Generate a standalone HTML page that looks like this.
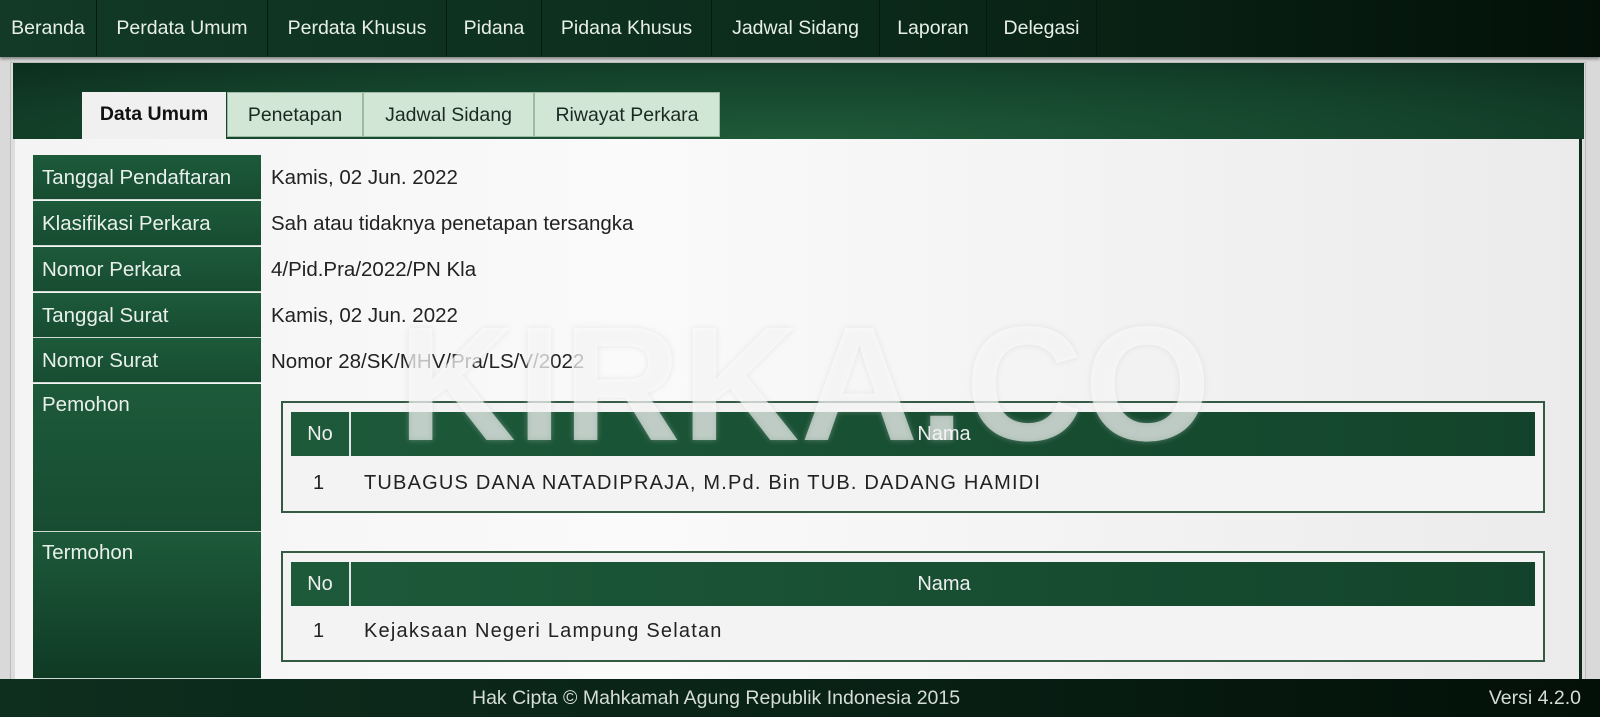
<!DOCTYPE html>
<html><head><meta charset="utf-8"><style>
*{margin:0;padding:0;box-sizing:border-box}
body{width:1600px;height:717px;overflow:hidden;background:#d9d9d9;font-family:"Liberation Sans",sans-serif;position:relative}
.nav{position:absolute;left:0;top:0;width:1600px;height:57px;background:linear-gradient(90deg,#123a26,#0c2c1c 50%,#031109);box-shadow:0 2px 3px rgba(0,0,0,.4)}
.nav div{position:absolute;top:0;height:56px;line-height:56px;color:#e8efe9;font-size:19.5px;text-align:center;border-right:1px solid #071a10}
.wrap{position:absolute;left:10px;top:62px;width:1576px;height:620px;background:#ddd;border:1px solid #bbb}
.band{position:absolute;left:13px;top:63px;width:1571px;height:76px;background:radial-gradient(ellipse at 50% 100%,#1f5a3a,#14432b 60%,#0c2e1d)}
.content{position:absolute;left:15px;top:139px;width:1567px;height:540px;background:linear-gradient(90deg,#f4f4f4,#fafafa 40%,#ebebeb);border-right:3px solid #0d2a1a}
.tab{position:absolute;top:92px;height:45px;line-height:44px;font-size:19.5px;text-align:center;color:#1a2a20;background:#d2e6d6;border:1px solid #9dbaa4}
.tab.on{background:#f0f0f0;font-weight:bold;color:#111;height:47px;border:none}
.lab{position:absolute;left:33px;width:228px;background:linear-gradient(180deg,#1d5a3a,#174c31);color:#e9f0ea;font-size:20.5px;padding:11px 9px;border-bottom:1px solid #cfd8d2}
.val{position:absolute;left:271px;font-size:20.5px;color:#222}
.box{position:absolute;left:281px;width:1264px;border:2px solid #355a44;background:#f3f3f3}
.hd{position:absolute;left:8px;right:8px;top:9px;height:44px;background:linear-gradient(90deg,#1d5a3a,#13442b);color:#eef;font-size:20px;line-height:44px}
.hd .no{position:absolute;left:0;width:60px;text-align:center;border-right:2px solid #e5e5e5;height:44px;color:#eee}
.hd .nm{position:absolute;left:62px;right:0;text-align:center;color:#eee}
.row{position:absolute;top:60px;left:0;font-size:20px;color:#222;letter-spacing:1.2px}
.footer{position:absolute;left:0;top:679px;width:1600px;height:38px;background:linear-gradient(90deg,#0e2e1e,#092216 50%,#031008);color:#d6ddd8;font-size:19.5px}
.wm{position:absolute;left:398px;top:290px;font-size:163px;font-weight:bold;color:rgba(255,255,255,.6);letter-spacing:1px;text-shadow:0 0 6px rgba(200,200,200,.4)}
</style></head><body>
<div class="nav">
<div style="left:0;width:97px">Beranda</div>
<div style="left:97px;width:171px">Perdata Umum</div>
<div style="left:268px;width:179px">Perdata Khusus</div>
<div style="left:447px;width:95px">Pidana</div>
<div style="left:542px;width:170px">Pidana Khusus</div>
<div style="left:712px;width:168px">Jadwal Sidang</div>
<div style="left:880px;width:107px">Laporan</div>
<div style="left:987px;width:110px">Delegasi</div>
</div>
<div class="wrap"></div>
<div class="band"></div>
<div class="content"></div>
<div class="tab on" style="left:82px;width:144px">Data Umum</div>
<div class="tab" style="left:227px;width:136px">Penetapan</div>
<div class="tab" style="left:363px;width:171px">Jadwal Sidang</div>
<div class="tab" style="left:534px;width:186px">Riwayat Perkara</div>

<div class="lab" style="top:155px;height:45px">Tanggal Pendaftaran</div>
<div class="lab" style="top:201px;height:45px">Klasifikasi Perkara</div>
<div class="lab" style="top:247px;height:45px">Nomor Perkara</div>
<div class="lab" style="top:293px;height:45px">Tanggal Surat</div>
<div class="lab" style="top:338px;height:45px">Nomor Surat</div>
<div class="lab" style="top:384px;height:148px;padding-top:9px">Pemohon</div>
<div class="lab" style="top:532px;height:147px;padding-top:9px;background:linear-gradient(180deg,#1d5a3a,#0f3a24)">Termohon</div>

<div class="val" style="top:166px">Kamis, 02 Jun. 2022</div>
<div class="val" style="top:212px">Sah atau tidaknya penetapan tersangka</div>
<div class="val" style="top:258px">4/Pid.Pra/2022/PN Kla</div>
<div class="val" style="top:304px">Kamis, 02 Jun. 2022</div>
<div class="val" style="top:350px">Nomor 28/SK/MHV/Pra/LS/V/2022</div>

<div class="box" style="top:401px;height:112px">
<div class="hd"><span class="no">No</span><span class="nm">Nama</span></div>
<div class="row" style="left:30px;top:69px">1</div>
<div class="row" style="left:81px;top:69px">TUBAGUS DANA NATADIPRAJA, M.Pd. Bin TUB. DADANG HAMIDI</div>
</div>
<div class="box" style="top:551px;height:111px">
<div class="hd"><span class="no">No</span><span class="nm">Nama</span></div>
<div class="row" style="left:30px;top:67px">1</div>
<div class="row" style="left:81px;top:67px">Kejaksaan Negeri Lampung Selatan</div>
</div>

<div class="wm">KIRKA.CO</div>

<div class="footer">
<span style="position:absolute;left:472px;top:8px">Hak Cipta © Mahkamah Agung Republik Indonesia 2015</span>
<span style="position:absolute;right:19px;top:8px">Versi 4.2.0</span>
</div>
</body></html>
